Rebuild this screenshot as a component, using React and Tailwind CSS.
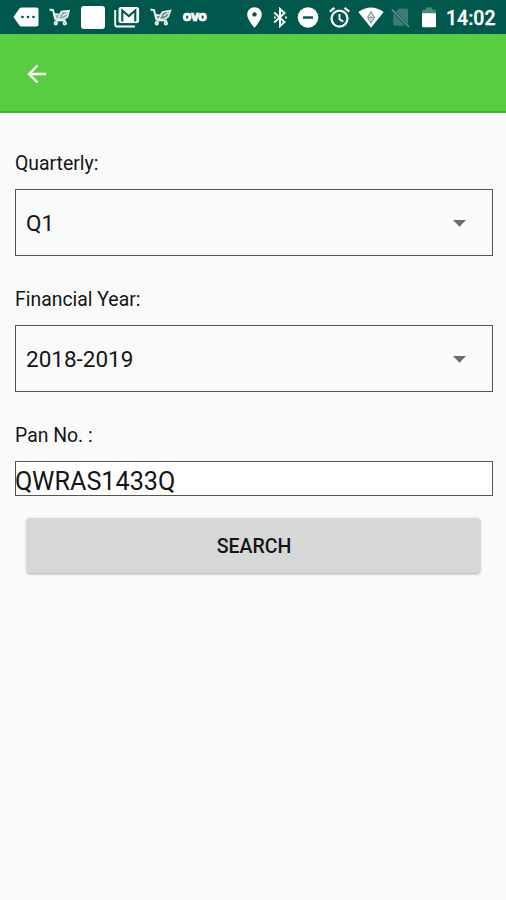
import React from 'react';

const CartIcon = ({ className, filled }) => (
  <svg className={className} viewBox="0 0 22 18" fill="none" stroke="#e6efed">
    <path d="M0.5 1.5 L4 2.2 L6.5 12" strokeWidth="2" />
    <path
      d={filled ? 'M5.5 6 L11 6.5 L12.5 3.5 L20 2.8 L18.5 9 L14 11.5 L7 11 Z' : 'M5.5 6.5 L10.5 7.5 L12.5 4 L20.5 2.5 L18 9 L13.5 11.5 L7 11 Z'}
      fill={filled ? '#8fb3ad' : '#5f938a'}
      strokeWidth="1.7"
    />
    <path d="M11 7.5 L9 11 M13.5 8 L18.5 4.5" strokeWidth="1.3" />
    <path d="M6.5 12.5 H17" strokeWidth="1.8" />
    <circle cx="6.8" cy="15.2" r="1.3" strokeWidth="1.8" />
    <circle cx="15.8" cy="15.2" r="1.3" strokeWidth="1.8" />
  </svg>
);

const StatusBar = () => (
  <div className="flex h-[34px] items-center bg-[#00574b] pl-[13px] text-white">
    {/* Messages */}
    <svg className="h-5 w-[26px] shrink-0" viewBox="0 0 26 20">
      <path d="M8.5 0.5 H23.5 Q25.5 0.5 25.5 2.5 V17.5 Q25.5 19.5 23.5 19.5 H8.5 Q7.2 19.5 6.4 18.4 L0.5 10 L6.4 1.6 Q7.2 0.5 8.5 0.5 Z" fill="#fff" />
      <circle cx="9.5" cy="10" r="1.35" fill="#00574b" />
      <circle cx="15" cy="10" r="1.35" fill="#00574b" />
      <circle cx="20.5" cy="10" r="1.35" fill="#00574b" />
    </svg>
    <CartIcon filled className="ml-2.5 h-[18px] w-[22px] shrink-0" />
    <div className="ml-2.5 h-[23px] w-6 shrink-0 rounded-[3px] bg-white"></div>
    {/* Mail */}
    <svg className="ml-[9px] h-[22px] w-[26px] shrink-0" viewBox="0 0 26 22">
      <path d="M1.2 4 V19 Q1.2 20.5 2.7 20.5 H21" fill="none" stroke="#fff" strokeWidth="1.9" />
      <path d="M6.5 1.5 H23 Q24.6 1.5 24.6 3 V15 Q24.6 16.6 23 16.6 H6.5 Q5 16.6 5 15 V3 Q5 1.5 6.5 1.5 Z" fill="#fff" stroke="#fff" />
      <path d="M8.3 15.5 V4.5 L14.8 10 L21.3 4.5 V15.5" fill="none" stroke="#00574b" strokeWidth="2.1" />
    </svg>
    <CartIcon className="ml-2.5 h-[18px] w-[22px] shrink-0" />
    <span className="ml-[11px] w-[25px] shrink-0 pt-[2px] font-[Inter,sans-serif] text-[10.5px] leading-8 font-black [-webkit-text-stroke:0.7px_white]">
      OVO
    </span>

    {/* Location */}
    <svg className="ml-[39px] h-[21px] w-[15px] shrink-0" viewBox="0 0 15 21">
      <path d="M7.5 0.3 C3.4 0.3 0.2 3.5 0.2 7.5 C0.2 12.8 7.5 20.7 7.5 20.7 S14.8 12.8 14.8 7.5 C14.8 3.5 11.6 0.3 7.5 0.3 Z" fill="#fff" />
      <circle cx="7.5" cy="7.4" r="2.2" fill="#00574b" />
    </svg>
    {/* Bluetooth */}
    <svg className="ml-[11px] h-[21px] w-3.5 shrink-0" viewBox="0 0 14 21" fill="none" stroke="#fff" strokeWidth="2">
      <path d="M1.2 5.5 L11.5 15 L7 19 V2 L11.5 6 L1.2 15.5" />
      <path d="M12.2 10.5 H13.9 M1 10.5 H2.7" />
    </svg>
    {/* Do not disturb */}
    <svg className="ml-2.5 h-[21px] w-[22px] shrink-0" viewBox="0 0 22 21">
      <circle cx="11" cy="10.5" r="10.3" fill="#fff" />
      <path d="M6 10.5 H16" stroke="#00574b" strokeWidth="2.4" />
    </svg>
    {/* Alarm */}
    <svg className="ml-2.5 h-[21px] w-[21px] shrink-0" viewBox="0 0 21 21" fill="none" stroke="#fff">
      <circle cx="10.5" cy="11.6" r="8" strokeWidth="2.3" />
      <path d="M10.5 7 V12.2 L14.2 14.6" strokeWidth="1.9" />
      <path d="M0.8 4.7 L5.4 0.9 M20.2 4.7 L15.6 0.9" strokeWidth="2.3" />
    </svg>
    {/* Wifi */}
    <svg className="ml-2 h-[21px] w-[26px] shrink-0" viewBox="0 0 26 21">
      <path d="M0.3 5 Q13 -4 25.7 5 L13 20.7 Z" fill="#fff" />
      <path d="M13 5 L16.3 10.5 L13 16 L9.7 10.5 Z" fill="none" stroke="#7c9b95" strokeWidth="1.3" />
      <path d="M10 10.5 H16 M13 8.5 V13" stroke="#7c9b95" />
    </svg>
    {/* No SIM */}
    <svg className="ml-[7px] h-[21px] w-5 shrink-0" viewBox="0 0 20 21">
      <path d="M8 1.5 H15.5 Q17 1.5 17 3 V17 L4.8 4.5 Z M2.2 6 L14.5 18.8 H3.8 Q2.2 18.8 2.2 17.2 Z" fill="#3c7c72" />
      <path d="M0.8 2.4 L18 20" stroke="#5b948b" strokeWidth="1.6" />
    </svg>
    {/* Battery */}
    <svg className="ml-[11px] h-[21px] w-3.5 shrink-0" viewBox="0 0 14 21">
      <path d="M4 0.5 H10 V2.5 H12.5 Q14 2.5 14 4 V7 H0 V4 Q0 2.5 1.5 2.5 H4 Z" fill="#4c877e" />
      <path d="M0 6.2 H14 V19 Q14 20.3 12.7 20.3 H1.3 Q0 20.3 0 19 Z" fill="#fff" />
    </svg>
    <span className="ml-2.5 pt-[3px] text-[19.5px] leading-[31px] font-medium [-webkit-text-stroke:0.3px_white]">14:02</span>
  </div>
);

const SelectField = ({ label, value }) => (
  <div className="mb-[31px]">
    <label className="block h-[26px] text-[19.4px] leading-[26px]">{label}</label>
    <div className="mt-3 flex h-[67px] items-center justify-between border border-[#555] pr-[26px] pl-2.5">
      <span className="pt-[2px] text-[22.5px]">{value}</span>
      <svg className="mt-px h-[7px] w-[13px]" viewBox="0 0 13 7">
        <path d="M0 0 H13 L6.5 6.7 Z" fill="#6b6b6b" />
      </svg>
    </div>
  </div>
);

const App = () => {
  return (
    <div className="min-h-[900px] w-[506px] overflow-hidden bg-[#fafafa] font-[Roboto,sans-serif] text-[#151515]">
      <StatusBar />

      <header className="flex h-[79px] items-center border-b-2 border-[#43b52d] bg-[#58cc42] pt-[2px] pl-[27px]">
        <svg className="h-5 w-5" viewBox="0 0 20 20" fill="none" stroke="#fff" strokeWidth="2.5">
          <path d="M19 10 H2.5 M10.5 1.5 L2.2 10 L10.5 18.5" />
        </svg>
      </header>

      <main className="pt-[38px] pr-[13px] pl-[15px]">
        <SelectField label="Quarterly:" value="Q1" />
        <SelectField label="Financial Year:" value="2018-2019" />

        <label className="block h-[26px] text-[19.4px] leading-[26px]">Pan No. :</label>
        <div className="mt-3 flex h-[35px] items-center border border-[#555] bg-white pt-[6px] text-[25.2px] leading-none">
          <span className="-ml-px">QWRAS1433Q</span>
        </div>

        <button className="mt-[22px] ml-3 block h-[55px] w-[453px] rounded-[3px] bg-[#d6d8d7] pt-[2px] pl-px text-[19.5px] font-medium shadow-[0_1px_3px_rgba(0,0,0,0.35)]">
          SEARCH
        </button>
      </main>
    </div>
  );
};

export default App;
